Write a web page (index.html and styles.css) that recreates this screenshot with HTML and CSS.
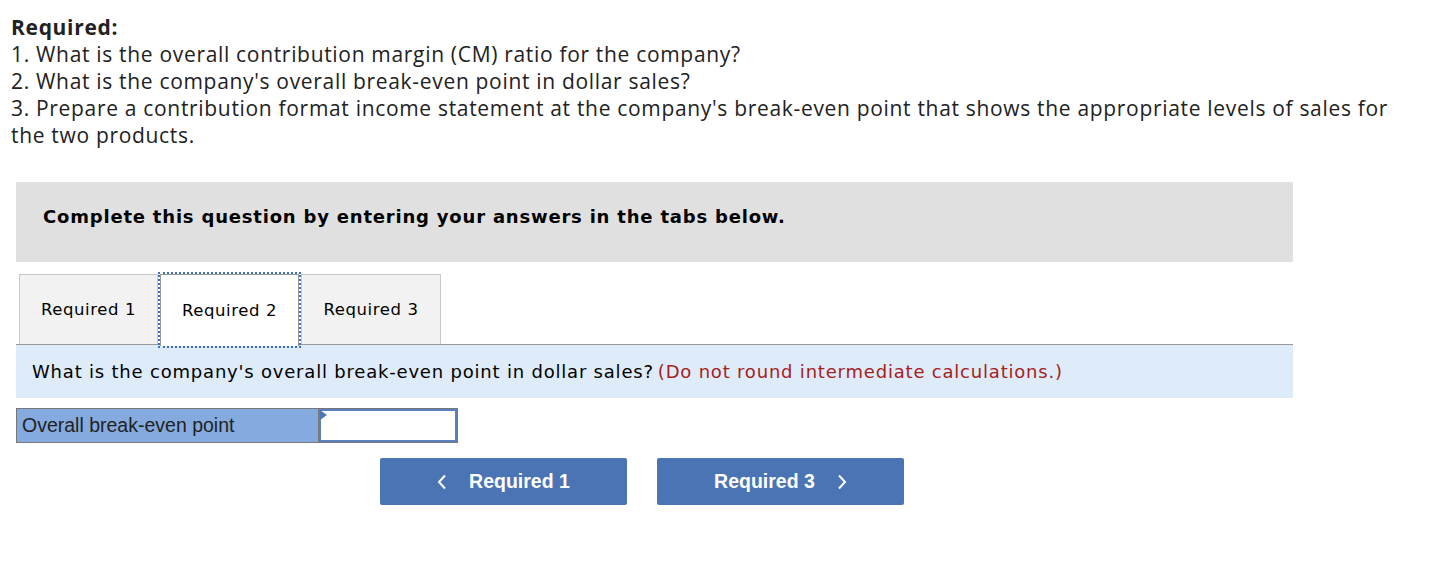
FILE: index.html
```html
<!DOCTYPE html>
<html>
<head>
<meta charset="utf-8">
<link rel="stylesheet" href="styles.css">
</head>
<body>
<div class="req">
  <div class="req-title">Required:</div>
  <div>1. What is the overall contribution margin (CM) ratio for the company?</div>
  <div>2. What is the company's overall break-even point in dollar sales?</div>
  <div>3. Prepare a contribution format income statement at the company's break-even point that shows the appropriate levels of sales for the two products.</div>
</div>
<div class="panel">
  <div class="banner">Complete this question by entering your answers in the tabs below.</div>
  <div class="tabs">
    <div class="tab first">Required 1</div>
    <div class="tab active">Required 2</div>
    <div class="tab last">Required 3</div>
  </div>
  <div class="question">What is the company's overall break-even point in dollar sales? <span class="note">(Do not round intermediate calculations.)</span></div>
  <div class="row">
    <div class="label">Overall break-even point</div>
    <div class="input"><div class="input-inner"></div></div>
  </div>
  <div class="nav">
    <div class="btn"><svg class="chev left" width="10" height="16" viewBox="0 0 10 16"><path d="M8 1.5 L2 8 L8 14.5" fill="none" stroke="#fff" stroke-width="2"/></svg>Required 1</div>
    <div class="btn">Required 3<svg class="chev right" width="10" height="16" viewBox="0 0 10 16"><path d="M2 1.5 L8 8 L2 14.5" fill="none" stroke="#fff" stroke-width="2"/></svg></div>
  </div>
</div>
</body>
</html>
```
FILE: styles.css
```css
body {
  margin: 0;
  background: #fff;
}
.req {
  font-family: "Open Sans", "Liberation Sans", sans-serif;
  font-size: 21px;
  letter-spacing: 0.68px;
  line-height: 27px;
  color: #222;
  padding: 14px 0 0 11px;
  width: 1402px;
  box-sizing: border-box;
}
.req-title {
  font-weight: bold;
}
.panel {
  margin: 33px 0 0 16px;
  width: 1277px;
  font-family: "DejaVu Sans", Verdana, sans-serif;
}
.banner {
  background: #e0e0e0;
  height: 80px;
  display: flex;
  align-items: center;
  padding-left: 27px;
  padding-bottom: 12px;
  box-sizing: border-box;
  font-weight: bold;
  font-size: 18px;
  letter-spacing: 0.8px;
  color: #000;
}
.tabs {
  display: flex;
  margin-top: 12px;
  padding-left: 3px;
  height: 70px;
  border-bottom: 1px solid #999;
}
.tab {
  background: #f2f2f2;
  border: 1px solid #c8c8c8;
  border-bottom: none;
  box-sizing: border-box;
  display: flex;
  align-items: center;
  justify-content: center;
  font-size: 16.5px;
  letter-spacing: 0.6px;
  color: #000;
}
.tab.first {
  width: 139px;
}
.tab.last {
  width: 140px;
}
.tab.active {
  background: #fff;
  width: 139px;
  margin: 0 2px;
  border: 1px solid #999;
  border-bottom: none;
  outline: 2px dotted #3f6fc0;
  outline-offset: 0;
  height: 72px;
  margin-bottom: -2px;
  position: relative;
}
.question {
  background: #deebf8;
  height: 53px;
  display: flex;
  align-items: center;
  padding-left: 16px;
  font-size: 18px;
  letter-spacing: 0.8px;
  color: #000;
}
.note {
  color: #a6211d;
  margin-left: 4px;
}
.row {
  display: flex;
  margin-top: 10px;
  height: 35px;
}
.label {
  width: 303px;
  box-sizing: border-box;
  background: #84aadf;
  border: 1px solid #777;
  font-family: "Liberation Sans", Arial, sans-serif;
  font-size: 19.5px;
  color: #222;
  display: flex;
  align-items: center;
  padding-left: 5px;
}
.input {
  width: 139px;
  box-sizing: border-box;
  border: 1px solid #777;
  border-left: none;
  display: flex;
}
.input-inner {
  flex: 1;
  background: #fff;
  border: 2px solid #5a80c0;
  position: relative;
}
.input-inner::before {
  content: "";
  position: absolute;
  left: -1px;
  top: -1px;
  border-left: 7px solid #4f78b8;
  border-top: 5px solid transparent;
  border-bottom: 5px solid transparent;
}
.nav {
  display: flex;
  gap: 30px;
  margin-top: 15px;
  padding-left: 364px;
}
.btn {
  width: 247px;
  height: 47px;
  background: #4a74b4;
  border-radius: 2px;
  color: #fff;
  font-family: "Liberation Sans", Arial, sans-serif;
  font-weight: bold;
  font-size: 19.5px;
  display: flex;
  align-items: center;
  justify-content: center;
}
.chev.left {
  margin-right: 22px;
}
.chev.right {
  margin-left: 22px;
}
```
